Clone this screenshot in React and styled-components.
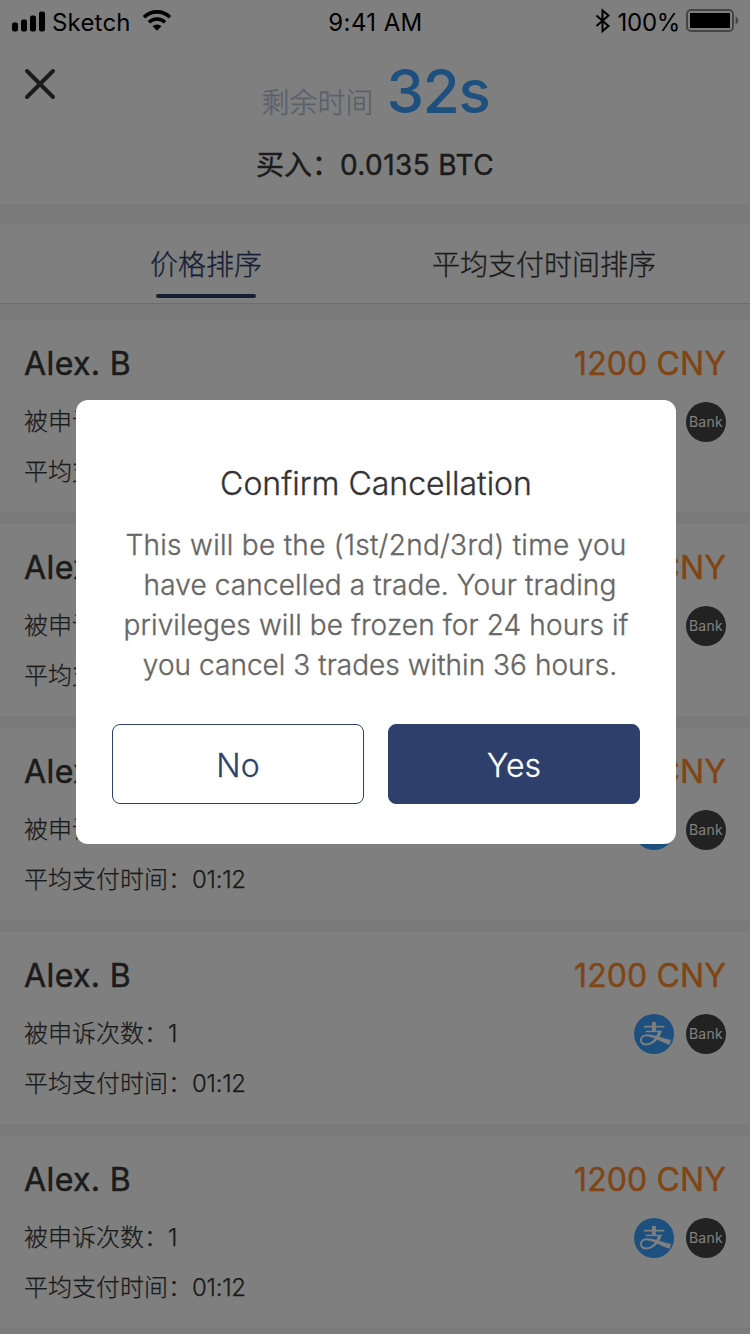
import React from 'react';
import styled, { createGlobalStyle } from 'styled-components';

const GlobalStyle = createGlobalStyle`
  * { box-sizing: border-box; }
  body {
    margin: 0;
    background: #f5f5f5;
    color: #363636;
    font-family: Inter, 'Noto Sans CJK SC', sans-serif;
    overflow: hidden;
  }
  button { font-family: inherit; cursor: pointer; }
`;

const Screen = styled.div`
  width: 750px;
  height: 1334px;
  overflow: hidden;
`;

const StatusBar = styled.div`
  height: 40px;
  padding: 4px 11px 0 12px;
  display: grid;
  grid-template-columns: 1fr auto 1fr;
  align-items: center;
  background: #fff;
  color: #000;
  font-size: 24px;
`;

const StatusSide = styled.div`
  display: flex;
  align-items: center;
  justify-content: ${(p) => (p.$end ? 'flex-end' : 'flex-start')};

  svg { margin-bottom: 2px; }
`;

const StatusText = styled.span`
  letter-spacing: ${(p) => p.$spacing || '0'};
  margin: ${(p) => p.$margin || '0'};
`;

const Header = styled.header`
  height: 164px;
  padding: 28px 24px 0;
  background: #fff;
  display: grid;
  grid-template-columns: 32px 1fr 32px;
`;

const CloseButton = styled.button`
  width: 32px;
  height: 32px;
  padding: 0;
  border: 0;
  background: none;
`;

const HeaderInfo = styled.div`
  display: flex;
  flex-direction: column;
  align-items: center;
`;

const Countdown = styled.div`
  display: flex;
  align-items: baseline;
  gap: 13px;
  height: 72px;
  margin-top: -13px;
  padding-left: 1px;
  line-height: 72px;
  color: #b3c0d5;
  font-size: 28px;
  font-weight: 300;
  -webkit-text-stroke: 0.3px;
`;

const Seconds = styled.strong`
  color: #3b9fff;
  font-size: 60px;
  font-weight: 500;
  letter-spacing: -1.3px;
  -webkit-text-stroke: 0;
`;

const Amount = styled.div`
  margin-top: 18px;
  line-height: 40px;
  font-size: 28px;
  font-weight: 400;
  -webkit-text-stroke: 0.4px;
`;

const AmountValue = styled.span`
  letter-spacing: 0.4px;
`;

const Tabs = styled.nav`
  height: 80px;
  margin-top: 20px;
  display: grid;
  grid-template-columns: 412px 264px;
  background: #fff;
  border-bottom: 1px solid #dcdcdc;
`;

const Tab = styled.div`
  display: flex;
  flex-direction: column;
  align-items: center;
  padding-top: 21px;
  line-height: 40px;
  font-size: 28px;
  font-weight: 300;
  -webkit-text-stroke: 0.3px;
  white-space: nowrap;
  color: ${(p) => (p.$active ? '#2f3f6b' : '#363636')};

  &::after {
    content: '';
    width: 100px;
    height: 4px;
    margin-top: 9px;
    border-radius: 2px;
    background: ${(p) => (p.$active ? '#2f3f6b' : 'transparent')};
  }
`;

const List = styled.main`
  display: flex;
  flex-direction: column;
  gap: 12px;
  padding-top: 16px;
`;

const Offer = styled.article`
  height: 192px;
  flex: none;
  padding: 20px 24px 0;
  background: #fff;
`;

const OfferRow = styled.div`
  display: flex;
  justify-content: space-between;
  align-items: center;
  height: ${(p) => p.$height}px;
  font-size: 24px;
  font-weight: 300;
`;

const Name = styled.h2`
  margin: 0;
  font-size: 32px;
  font-weight: 400;
  letter-spacing: 0.4px;
  -webkit-text-stroke: 0.5px;
`;

const Price = styled.span`
  color: #ff8b28;
  font-size: 32px;
  font-weight: 400;
  letter-spacing: 0.1px;
  -webkit-text-stroke: 0.4px;
`;

const Detail = styled.span`
  line-height: 34px;
  -webkit-text-stroke: 0.25px;
`;

const Value = styled.span`
  letter-spacing: -0.3px;
`;

const Methods = styled.div`
  display: flex;
  gap: 12px;
`;

const Bank = styled.span`
  width: 40px;
  height: 40px;
  border-radius: 50%;
  background: #444;
  color: #fff;
  font-size: 14px;
  font-weight: 400;
  line-height: 40px;
  letter-spacing: 0.3px;
  display: flex;
  justify-content: center;
`;

const Overlay = styled.div`
  position: absolute;
  top: 0;
  left: 0;
  width: 750px;
  height: 1334px;
  padding: 400px 74px 0 76px;
  background: rgba(0, 0, 0, 0.5);
`;

const Dialog = styled.section`
  width: 600px;
  height: 444px;
  padding: 61px 36px 40px;
  border-radius: 12px;
  background: #fff;
  text-align: center;
`;

const DialogTitle = styled.h1`
  margin: 0;
  color: #333;
  font-size: 32px;
  font-weight: 300;
  line-height: 46px;
  -webkit-text-stroke: 0.35px;
`;

const DialogText = styled.p`
  margin: 18px 0 0;
  color: #666;
  font-size: 28px;
  font-weight: 300;
  line-height: 40px;
  -webkit-text-stroke: 0.35px;
`;

const Line = styled.span`
  display: block;
  white-space: nowrap;
  letter-spacing: ${(p) => p.$spacing || '0'};
  padding-left: ${(p) => p.$shift || '0'};
`;

const Actions = styled.div`
  display: grid;
  grid-template-columns: 1fr 1fr;
  gap: 24px;
  margin-top: 39px;
`;

const Action = styled.button`
  height: 80px;
  padding: 2px 0 0;
  border: 1px solid #2f3f6b;
  border-radius: 8px;
  background: ${(p) => (p.$primary ? '#2f3f6b' : '#fff')};
  color: ${(p) => (p.$primary ? '#fff' : '#2f3f6b')};
  font-size: 32px;
  font-weight: 300;
  -webkit-text-stroke: 0.3px;
`;

const Signal = () => (
  <svg width="34" height="22" viewBox="0 0 34 22">
    <rect x="0" y="12.5" width="6" height="9" rx="2" />
    <rect x="9" y="9.5" width="6" height="12" rx="2" />
    <rect x="18" y="5.5" width="6" height="16" rx="2" />
    <rect x="27" y="1.5" width="6" height="20" rx="2" />
  </svg>
);

const Wifi = () => (
  <svg width="30" height="22" viewBox="0 0 30 22">
    <g fill="none" stroke="#000" strokeWidth="3.6">
      <path d="M2 7.2 A18.5 18.5 0 0 1 28 7.2" />
      <path d="M6.9 12.3 A11.5 11.5 0 0 1 23.1 12.3" />
    </g>
    <path d="M15 20.8 L10.5 16.3 A6.4 6.4 0 0 1 19.5 16.3 Z" />
  </svg>
);

const Bluetooth = () => (
  <svg width="16" height="26" viewBox="0 0 16 26">
    <path d="M1.5 7.5 L13.5 18 L7.5 23 V2.5 L13.5 7.5 L1.5 18" fill="none" stroke="#000" strokeWidth="2" />
  </svg>
);

const Battery = () => (
  <svg width="53" height="24" viewBox="0 0 53 24">
    <rect x="1" y="1" width="46" height="21" rx="4" fill="none" stroke="#8a8a8a" strokeWidth="2" />
    <rect x="4" y="4" width="40" height="15" />
    <path d="M50 8 A4.2 4.2 0 0 1 50 15 Z" fill="#8a8a8a" stroke="#8a8a8a" strokeWidth="0.8" />
  </svg>
);

const Close = () => (
  <svg width="32" height="32" viewBox="0 0 32 32">
    <path d="M3 3 L29 29 M29 3 L3 29" stroke="#363636" strokeWidth="4" strokeLinecap="round" />
  </svg>
);

const Alipay = () => (
  <svg width="40" height="40" viewBox="0 0 40 40" role="img" aria-label="Alipay">
    <circle cx="20" cy="20" r="20" fill="#3b9fff" />
    <g fill="#fff">
      <rect x="10" y="11.8" width="20.3" height="1.7" />
      <rect x="18" y="8" width="3.8" height="9.5" />
      <rect x="11.7" y="16.7" width="16" height="1.5" />
      <path d="M13 20.2 C20 20.2 27 24.2 37 25.8 L35.8 30.8 C27 28.6 20 22.7 13 22.3 C9.5 22.2 7.8 24 7.8 26 C7.8 28.2 9.5 29.4 12.3 29.4 C18 29.4 22.5 23.5 24.2 17.2 L27.7 17.2 C25.8 23.5 20.5 31.4 12 31.4 C8 31.4 6 28.8 6 26 C6 23 8.5 20.2 13 20.2 Z" />
    </g>
  </svg>
);

const offers = Array.from({ length: 5 }, (_, id) => ({
  id,
  name: 'Alex. B',
  price: '1200 CNY',
  appeals: '1',
  time: '01:12',
}));

export default function App() {
  return (
    <Screen>
      <GlobalStyle />
      <StatusBar>
        <StatusSide>
          <Signal />
          <StatusText $margin="0 11px 0 6px" $spacing="0.2px">Sketch</StatusText>
          <Wifi />
        </StatusSide>
        <StatusText $spacing="0.4px">9:41 AM</StatusText>
        <StatusSide $end>
          <Bluetooth />
          <StatusText $margin="0 6px 0 7px" $spacing="-0.3px">100%</StatusText>
          <Battery />
        </StatusSide>
      </StatusBar>
      <Header>
        <CloseButton aria-label="Close"><Close /></CloseButton>
        <HeaderInfo>
          <Countdown>剩余时间<Seconds>32s</Seconds></Countdown>
          <Amount>买入：<AmountValue>0.0135 BTC</AmountValue></Amount>
        </HeaderInfo>
      </Header>
      <Tabs>
        <Tab $active>价格排序</Tab>
        <Tab>平均支付时间排序</Tab>
      </Tabs>
      <List>
        {offers.map((o) => (
          <Offer key={o.id}>
            <OfferRow $height={46}><Name>{o.name}</Name><Price>{o.price}</Price></OfferRow>
            <OfferRow $height={72}>
              <Detail>被申诉次数：<Value>{o.appeals}</Value></Detail>
              <Methods><Alipay /><Bank>Bank</Bank></Methods>
            </OfferRow>
            <OfferRow $height={28}><Detail>平均支付时间：<Value>{o.time}</Value></Detail></OfferRow>
          </Offer>
        ))}
      </List>
      <Overlay>
        <Dialog>
          <DialogTitle>Confirm Cancellation</DialogTitle>
          <DialogText>
            <Line $spacing="0.3px">This will be the (1st/2nd/3rd) time you</Line>
            <Line $shift="8px" $spacing="0.13px">have cancelled a trade. Your trading</Line>
            <Line $spacing="0.12px">privileges will be frozen for 24 hours if</Line>
            <Line $shift="8px" $spacing="0.04px">you cancel 3 trades within 36 hours.</Line>
          </DialogText>
          <Actions>
            <Action>No</Action>
            <Action $primary>Yes</Action>
          </Actions>
        </Dialog>
      </Overlay>
    </Screen>
  );
}
